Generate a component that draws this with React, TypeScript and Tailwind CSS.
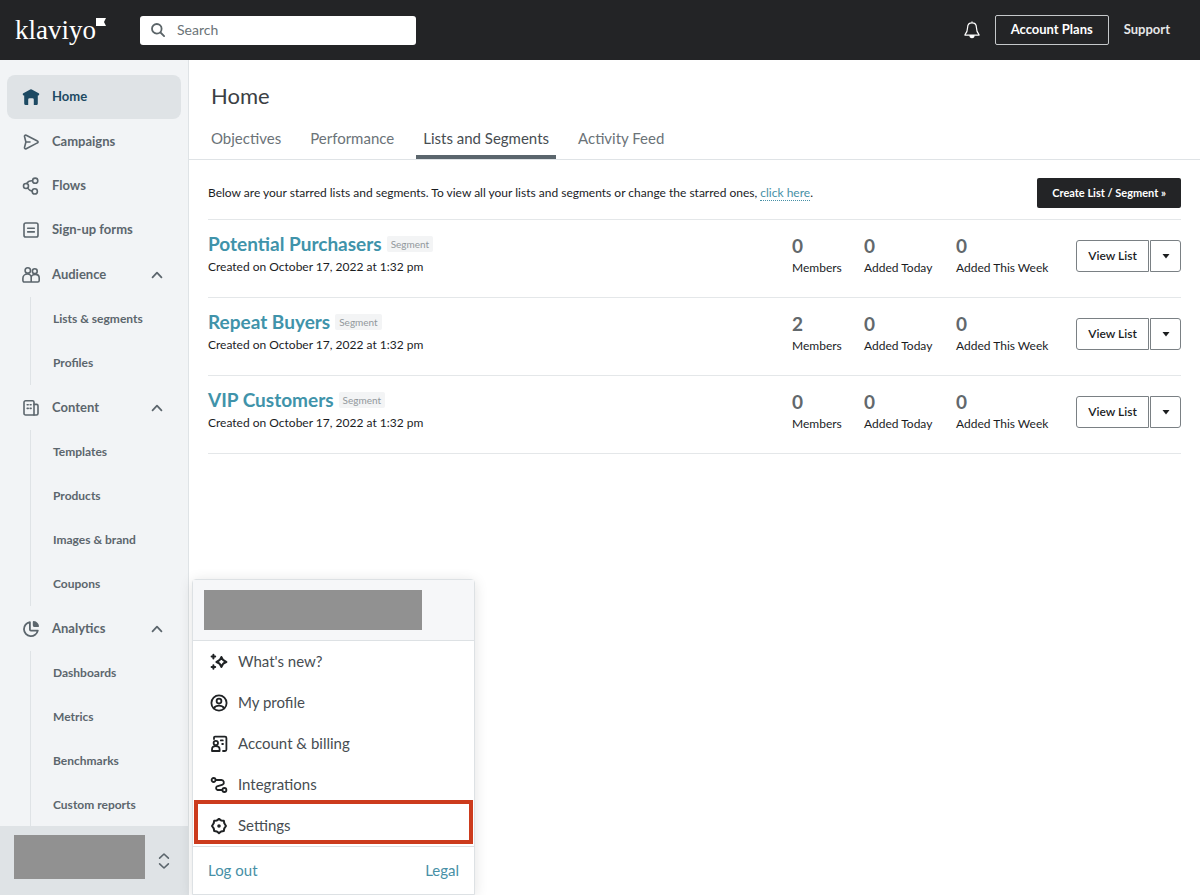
import React from 'react';

type IconProps = { children: React.ReactNode; className?: string; strokeWidth?: number };

const Icon: React.FC<IconProps> = ({ children, className = 'h-[18px] w-[18px]', strokeWidth = 1.6 }) => (
  <svg
    viewBox="0 0 18 18"
    fill="none"
    stroke="currentColor"
    strokeWidth={strokeWidth}
    strokeLinecap="round"
    strokeLinejoin="round"
    className={`shrink-0 ${className}`}
    aria-hidden="true"
  >
    {children}
  </svg>
);

const HomeIcon = () => (
  <Icon>
    <path
      fill="currentColor"
      stroke="none"
      d="M8.2 1.5a1.6 1.6 0 0 1 1.6 0l6.9 3.7c1 .6.6 2.2-.5 2.2h-.4v8c0 .9-.7 1.6-1.6 1.6h-2.4v-5.4A1.4 1.4 0 0 0 10.400 10.200H7.600a1.400 1.400 0 0 0-1.400 1.400V17H3.800a1.600 1.600 0 0 1-1.600-1.600v-8h-.4c-1.100 0-1.500-1.600-.5-2.200z"
    />
  </Icon>
);

const CampaignsIcon = () => (
  <Icon>
    <path d="M4.2 2.2 15.400 8c.9.4.9 1.500 0 1.900L4.200 15.800c-1 .4-1.900-.4-1.700-1.300L3.900 9 2.500 3.500c-.3-.9.7-1.700 1.700-1.300zM4.200 9h3.800" />
  </Icon>
);

const FlowsIcon = () => (
  <Icon>
    <circle cx="4" cy="9" r="2.5" />
    <circle cx="13.2" cy="3.7" r="2.6" />
    <circle cx="12.8" cy="14.400" r="2.600" />
    <path d="M4.800 6.400C5.800 4.500 7.800 3.600 10.400 3.700M5.600 11.100c1.200 1.700 2.700 2.600 4.600 3" />
  </Icon>
);

const FormsIcon = () => (
  <Icon>
    <rect x="2" y="2" width="14" height="14" rx="1.8" />
    <path d="M5.7 7.2h6.6M5.7 10.9h6.6" />
  </Icon>
);

const AudienceIcon = () => (
  <Icon>
    <circle cx="5.8" cy="4.4" r="2.700" />
    <circle cx="12.800" cy="5.200" r="2.400" />
    <path d="M9.200 16H2.300c-.8 0-1.400-.6-1.400-1.400v-2.400c0-2.300 2-4.200 4.700-4.200 2 0 3.600 1.500 3.600 3.400zM9.200 16h6.600c.8 0 1.400-.6 1.400-1.400v-2.700c0-2-1.700-3.500-4-3.500-2.200 0-4 1.400-4 3.200" />
  </Icon>
);

const ContentIcon = () => (
  <Icon>
    <path d="M3.600 1.800h7c.8 0 1.400.6 1.400 1.400V16H3.600c-.9 0-1.600-.7-1.600-1.600v-11c0-.9.7-1.600 1.600-1.600z" />
    <path d="M12 5.400h2.600c.8 0 1.400.6 1.400 1.400v7.600c0 .9-.7 1.600-1.600 1.600H12M5.200 5.800h1M8.200 5.800h.9M5.200 9.400h1M8.200 9.400h.9" />
  </Icon>
);

const AnalyticsIcon = () => (
  <Icon strokeWidth={1.8}>
    <path d="M7.900 2.200a7 7 0 1 0 7.900 8.400H8.900c-.6 0-1-.4-1-1z" />
    <path fill="currentColor" d="M11.700 2c2.200.4 4 2 4.400 4.200h-3.400c-.6 0-1-.4-1-1z" />
  </Icon>
);

const ChevronUp = () => (
  <Icon className="h-4 w-4" strokeWidth={2}>
    <path d="M4 11.600 9 6.400l5 5.200" />
  </Icon>
);

const SparkleIcon = () => (
  <Icon strokeWidth={2}>
    <path d="M11.400 4c.8 2.900 1.900 4.100 5 5-3.100.9-4.200 2.100-5 5-.8-2.900-1.900-4.100-5-5 3.100-.9 4.200-2.100 5-5z" />
    <path d="M3.400 1.800v3.600M1.600 3.600h3.600M3.400 12.200v3.600M1.600 14h3.600" />
  </Icon>
);

const ProfileIcon = () => (
  <Icon strokeWidth={1.8}>
    <circle cx="9" cy="9" r="7.600" />
    <circle cx="9" cy="7.100" r="2.400" />
    <path d="M3.800 14.200c1.200-1.700 2.900-2.500 5.200-2.500s4 .8 5.200 2.500" />
  </Icon>
);

const BillingIcon = () => (
  <Icon strokeWidth={1.8}>
    <path d="M4 4V2.600c0-.6.4-1 1-1h10c.8 0 1.400.6 1.400 1.400v11.600c0 .8-.6 1.400-1.400 1.400h-2M10.800 5.400h2M12.200 9h.8" />
    <circle cx="5.800" cy="8" r="2.200" />
    <path d="M2 16v-1.600c0-1.900 1.600-3.200 3.800-3.200s3.800 1.300 3.800 3.200V16z" />
  </Icon>
);

const IntegrationsIcon = () => (
  <Icon strokeWidth={1.8}>
    <circle cx="3.600" cy="4" r="2" />
    <circle cx="14.400" cy="14" r="2" />
    <path d="M5.800 4h5.600a2.500 2.500 0 0 1 1.300 4.600l-5.600 1.700A2 2 0 0 0 7.600 14h4.600" />
  </Icon>
);

const SettingsIcon = () => (
  <Icon strokeWidth={2}>
    <path d="m9 1.900 2.100 1.500 2.700.3.500 2.600L16 9l-1.700 2.300-.5 2.700-2.700.5L9 16.100l-2.100-1.600-2.700-.5-.5-2.700L2 9l1.700-2.700.5-2.600 2.700-.3z" />
    <circle cx="9" cy="9" r=".8" fill="currentColor" />
  </Icon>
);

const BellIcon = () => (
  <svg viewBox="0 0 16 18" fill="none" stroke="currentColor" strokeWidth="1.2" strokeLinejoin="round" className="h-[18px] w-4" aria-hidden="true">
    <path d="M8 1.900c-2.800 0-4.400 2-4.400 4.700 0 3.600-.8 5-2.600 7v.6h14v-.6c-1.800-2-2.600-3.400-2.600-7 0-2.700-1.600-4.700-4.400-4.700zM8 .6v1.200" />
    <path d="M6 14.600a2 2 0 0 0 4 0z" fill="currentColor" />
  </svg>
);

const navLinks = [
  { label: 'Campaigns', icon: <CampaignsIcon /> },
  { label: 'Flows', icon: <FlowsIcon /> },
  { label: 'Sign-up forms', icon: <FormsIcon /> },
];

const navGroups = [
  { label: 'Audience', icon: <AudienceIcon />, items: ['Lists & segments', 'Profiles'] },
  { label: 'Content', icon: <ContentIcon />, items: ['Templates', 'Products', 'Images & brand', 'Coupons'] },
  { label: 'Analytics', icon: <AnalyticsIcon />, items: ['Dashboards', 'Metrics', 'Benchmarks', 'Custom reports'] },
];

const tabs = ['Objectives', 'Performance', 'Lists and Segments', 'Activity Feed'];

const segments = [
  { name: 'Potential Purchasers', members: 0, today: 0, week: 0 },
  { name: 'Repeat Buyers', members: 2, today: 0, week: 0 },
  { name: 'VIP Customers', members: 0, today: 0, week: 0 },
];

const menuItems = [
  { label: "What's new?", icon: <SparkleIcon /> },
  { label: 'My profile', icon: <ProfileIcon /> },
  { label: 'Account & billing', icon: <BillingIcon /> },
  { label: 'Integrations', icon: <IntegrationsIcon /> },
  { label: 'Settings', icon: <SettingsIcon />, highlighted: true },
];

const Header = () => (
  <header className="flex h-[60px] shrink-0 items-center bg-[#232426] pr-[30px] pl-[15px] text-white">
    <a href="#" className="flex w-[125px] items-start">
      <span className="font-['Liberation_Serif',serif] text-[27px] leading-8">klaviyo</span>
      <svg viewBox="0 0 10 8" className="mt-1 h-2 w-[10px]" fill="currentColor" aria-hidden="true">
        <path d="M0 0h10L8 4l2 4H0z" />
      </svg>
    </a>
    <div className="flex h-[29px] w-[276px] items-center gap-3 rounded-[3px] bg-white px-[11px] text-[#5b6468]">
      <svg viewBox="0 0 14 14" fill="none" stroke="currentColor" strokeWidth="1.8" strokeLinecap="round" className="h-[14px] w-[14px] shrink-0" aria-hidden="true">
        <circle cx="5.800" cy="5.800" r="4.800" />
        <path d="m9.500 9.500 3.600 3.600" />
      </svg>
      <input
        type="search"
        aria-label="Search"
        placeholder="Search"
        className="w-full min-w-0 bg-transparent text-sm outline-none placeholder:text-[#6b7377]"
      />
    </div>
    <div className="ml-auto flex items-center gap-[15px]">
      <button type="button" aria-label="Notifications">
        <BellIcon />
      </button>
      <button type="button" className="h-[30px] rounded-xs border border-[#c5c8ca] px-[15px] text-[13px] font-bold">
        Account Plans
      </button>
      <a href="#" className="text-[13px] font-bold text-[#e6e7e8]">
        Support
      </a>
    </div>
  </header>
);

const AccountMenu = () => (
  <div className="absolute bottom-0 left-[192px] z-10 flex w-[283px] flex-col rounded-t border border-[#dde1e4] bg-white text-[15px] font-normal text-[#474d52] shadow-[0_2px_14px_rgba(0,0,0,0.12)]">
    <div className="border-b border-[#dde1e4] bg-[#f6f7f9] px-[11px] py-[10px]">
      <div className="h-10 w-[218px] bg-[#919191]" />
    </div>
    <ul className="border-b border-[#dde1e4]">
      {menuItems.map((item) => (
        <li key={item.label} className="relative">
          <a href="#" className="flex h-[41px] items-center gap-[10px] px-[17px]">
            <span className="text-[#1f2224]">{item.icon}</span>
            {item.label}
          </a>
          {item.highlighted && (
            <div className="pointer-events-none absolute inset-x-px -top-[5px] bottom-[2px] border-4 border-[#cc3b1d]" />
          )}
        </li>
      ))}
    </ul>
    <div className="flex h-[47px] items-center justify-between px-[15px] text-[#4790a6]">
      <a href="#">Log out</a>
      <a href="#">Legal</a>
    </div>
  </div>
);

const Sidebar = () => (
  <aside className="relative flex w-[189px] shrink-0 flex-col bg-[#f2f4f6] text-[13px] font-bold text-[#5c666d]">
    <nav className="min-h-0 flex-1 overflow-y-auto border-r border-[#dfe3e6] px-[7px] pt-[15px] [scrollbar-width:none]">
      <a href="#" className="mb-px flex h-11 items-center gap-3 rounded-lg bg-[#dfe3e6] px-[15px] text-[#1d4a63]">
        <HomeIcon />
        Home
      </a>
      {navLinks.map((link) => (
        <a key={link.label} href="#" className="flex h-11 items-center gap-3 px-[15px]">
          {link.icon}
          {link.label}
        </a>
      ))}
      {navGroups.map((group) => (
        <div key={group.label} className="mt-px">
          <button type="button" aria-expanded="true" className="flex h-11 w-full items-center gap-3 pr-4 pl-[15px] text-left">
            {group.icon}
            <span className="flex-1">{group.label}</span>
            <ChevronUp />
          </button>
          <ul className="ml-[23px] border-l border-[#dfe3e6] text-xs">
            {group.items.map((item) => (
              <li key={item}>
                <a href="#" className="flex h-11 items-center pl-[22px]">
                  {item}
                </a>
              </li>
            ))}
          </ul>
        </div>
      ))}
    </nav>
    <div className="flex h-[69px] shrink-0 items-center justify-between bg-[#dfe3e6] pr-4 pb-[7px] pl-[14px]">
      <div className="h-11 w-[131px] bg-[#919191]" />
      <button type="button" aria-label="Account menu" aria-expanded="true" className="pt-2">
        <Icon>
          <path d="M4.600 6.200 9 2l4.400 4.200M4.600 11.800 9 16l4.400-4.200" />
        </Icon>
      </button>
    </div>
    <AccountMenu />
  </aside>
);

const Stat: React.FC<{ value: number; label: string; className: string }> = ({ value, label, className }) => (
  <div className={`pt-[2px] ${className}`}>
    <div className="text-[19px] leading-6 font-bold text-[#62686c]">{value}</div>
    <div className="text-xs leading-5">{label}</div>
  </div>
);

const App: React.FC = () => {
  return (
    <div className="flex h-screen flex-col bg-white font-['Lato',sans-serif] text-[#1b1d1f]">
      <Header />
      <div className="flex min-h-0 flex-1">
        <Sidebar />
        <main className="min-w-0 flex-1 overflow-y-auto">
          <h1 className="px-[22px] pt-[22px] text-[22px] leading-7 text-[#3b4044]">Home</h1>
          <div role="tablist" className="mt-2 flex gap-[15px] border-b border-[#dfe3e6] px-[15px] text-[15px] text-[#6b7378]">
            {tabs.map((tab) => {
              const active = tab === 'Lists and Segments';
              return (
                <button
                  key={tab}
                  type="button"
                  role="tab"
                  aria-selected={active}
                  className={`h-[41px] border-b-4 px-[7px] pt-[3px] ${active ? 'border-[#5b666d] text-[#474d52]' : 'border-transparent'}`}
                >
                  {tab}
                </button>
              );
            })}
          </div>

          <div className="px-[19px]">
            <div className="flex items-center justify-between border-b border-[#e4e7e9] pt-[18px] pb-[11px]">
              <p className="text-xs leading-5">
                Below are your starred lists and segments. To view all your lists and segments or change the starred ones,{' '}
                <a href="#" className="border-b border-dotted border-[#4790a6] text-[#4790a6]">
                  click here
                </a>
                .
              </p>
              <button type="button" className="h-[30px] shrink-0 rounded-xs bg-[#232426] px-[15px] text-[11px] font-bold text-white">
                Create List / Segment »
              </button>
            </div>

            <ul>
              {segments.map((segment) => (
                <li key={segment.name} className="flex h-[78px] items-start border-b border-[#e4e7e9] pt-3">
                  <div className="flex-1">
                    <div className="flex items-center gap-[5px]">
                      <a href="#" className="text-[19px] leading-6 font-bold text-[#4093aa]">
                        {segment.name}
                      </a>
                      <span className="rounded-xs bg-[#f3f4f5] px-1 text-[10px] leading-4 text-[#92989c]">Segment</span>
                    </div>
                    <p className="pt-px text-xs leading-5">Created on October 17, 2022 at 1:32 pm</p>
                  </div>
                  <Stat value={segment.members} label="Members" className="w-[72px]" />
                  <Stat value={segment.today} label="Added Today" className="w-[92px]" />
                  <Stat value={segment.week} label="Added This Week" className="w-[120px]" />
                  <div className="mt-2 flex gap-px">
                    <button type="button" className="h-8 w-[73px] rounded-l-[3px] border border-[#7a8084] text-xs font-semibold">
                      View List
                    </button>
                    <button
                      type="button"
                      aria-label={`More actions for ${segment.name}`}
                      className="flex h-8 w-[31px] items-center justify-center rounded-r-[3px] border border-[#7a8084]"
                    >
                      <svg viewBox="0 0 8 5" className="h-[5px] w-2" fill="currentColor" aria-hidden="true">
                        <path d="M.5 0h7L4 4.500z" />
                      </svg>
                    </button>
                  </div>
                </li>
              ))}
            </ul>
          </div>
        </main>
      </div>
    </div>
  );
};

export default App;
